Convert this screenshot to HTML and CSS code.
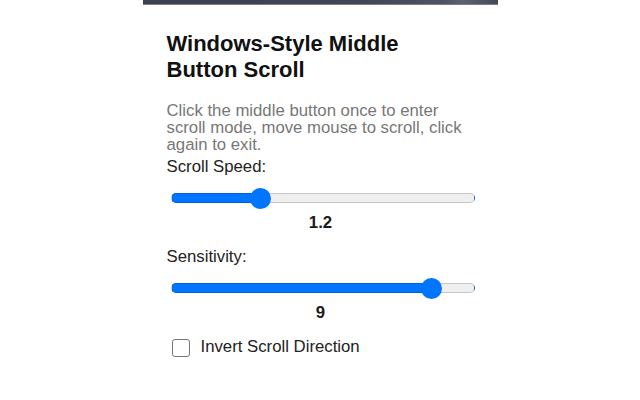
FILE: index.html
```html
<!DOCTYPE html>
<html lang="en">
<head>
<meta charset="utf-8">
<title>Windows-Style Middle Button Scroll</title>
<link rel="stylesheet" href="styles.css">
</head>
<body>
<div class="popup">
  <div class="banner"></div>
  <div class="content">
    <h1 class="title">Windows-Style Middle Button Scroll</h1>
    <p class="desc">Click the middle button once to enter scroll mode, move mouse to scroll, click again to exit.</p>
    <div class="group">
      <label class="field-label" for="speed">Scroll Speed:</label>
      <input class="range" id="speed" type="range" min="0.5" max="3" step="0.1" value="1.2" style="--fill: calc(10.5px + 0.28 * 283px)">
      <div class="value">1.2</div>
    </div>
    <div class="group">
      <label class="field-label" for="sens">Sensitivity:</label>
      <input class="range" id="sens" type="range" min="1" max="10" step="1" value="9" style="--fill: calc(10.5px + 0.8889 * 283px)">
      <div class="value">9</div>
    </div>
    <div class="option">
      <input class="check" id="invert" type="checkbox">
      <label class="option-label" for="invert">Invert Scroll Direction</label>
    </div>
  </div>
</div>
</body>
</html>
```
FILE: styles.css
```css
body {
  margin: 0;
  background: #ffffff;
  font-family: "Liberation Sans", Arial, sans-serif;
}

.popup {
  width: 355px;
  margin: 0 auto;
}

.banner {
  height: 4px;
  background: linear-gradient(90deg, #3b4050 0%, #414656 60%, #4f5464 85%, #5d6271 90%, #434858 100%);
  border-bottom: 1px solid #7e7e7e;
}

.content {
  padding: 26px 23px 0 24px;
}

.title {
  margin: 0;
  font-size: 22px;
  font-weight: bold;
  line-height: normal;
  color: #111111;
}

.desc {
  margin: 18.6px 0 0;
  font-size: 16.75px;
  line-height: 17px;
  color: #777777;
}

.group {
  margin-top: 4.6px;
}

.group + .group {
  margin-top: 15px;
}

.field-label {
  display: block;
  font-size: 16.75px;
  line-height: 19px;
  color: #222222;
}

.range {
  -webkit-appearance: none;
  appearance: none;
  display: block;
  width: 304px;
  height: 22px;
  margin: 11px 0 0 4px;
  padding: 0;
  background: transparent;
}

.range::-webkit-slider-runnable-track {
  box-sizing: border-box;
  height: 10px;
  border-radius: 5px;
  border: 1px solid rgba(0, 0, 0, 0.17);
  background: linear-gradient(to right, #0075ff var(--fill), #efefef var(--fill));
}

.range::-webkit-slider-thumb {
  -webkit-appearance: none;
  appearance: none;
  width: 21px;
  height: 21px;
  margin-top: -6.5px;
  border: none;
  border-radius: 50%;
  background: #0075ff;
}

.value {
  margin-top: 4px;
  text-align: center;
  font-size: 16.75px;
  line-height: 19px;
  font-weight: bold;
  color: #1a1a1a;
}

.option {
  display: flex;
  align-items: flex-start;
  margin-top: 14.5px;
}

.check {
  -webkit-appearance: none;
  appearance: none;
  box-sizing: border-box;
  width: 18px;
  height: 17.5px;
  margin: 2.7px 11px 0 5px;
  border: 1.3px solid #767676;
  border-radius: 3px;
  background: #ffffff;
}

.option-label {
  font-size: 16.75px;
  line-height: 19px;
  color: #222222;
}
```
